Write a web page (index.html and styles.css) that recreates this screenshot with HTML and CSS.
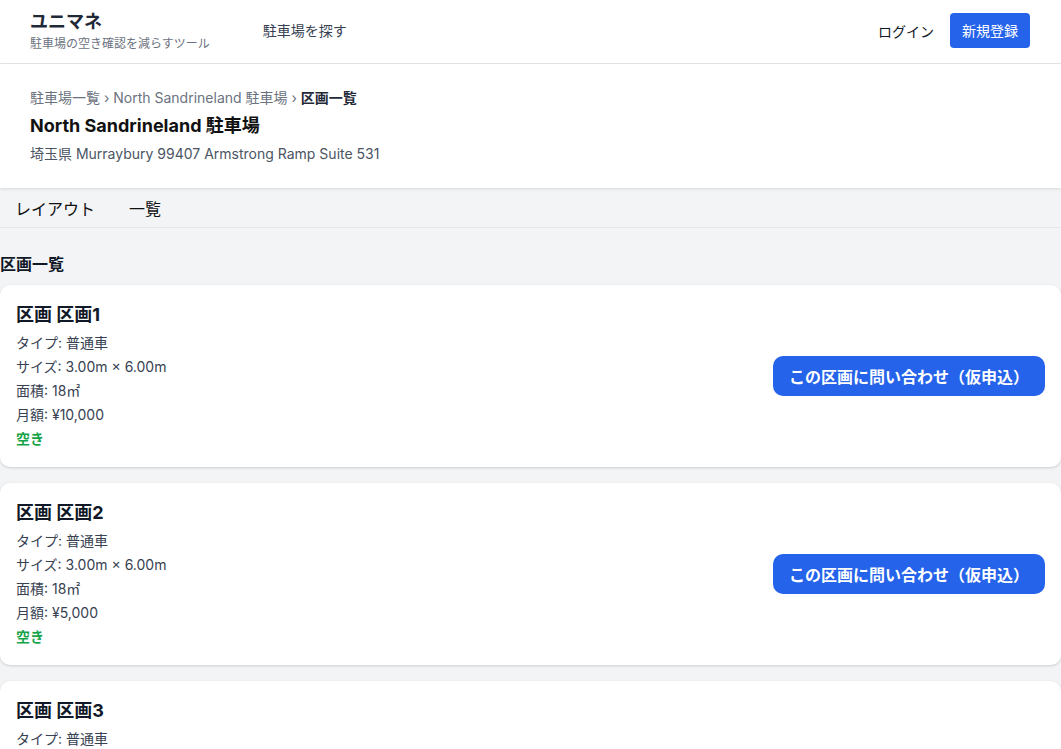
FILE: index.html
```html
<!DOCTYPE html>
<html lang="ja">
<head>
<meta charset="UTF-8" />
<meta name="viewport" content="width=device-width, initial-scale=1" />
<title>区画一覧 | ユニマネ</title>
<link rel="stylesheet" href="styles.css">
</head>
<body>

<header class="site-header">
  <div class="brand">
    <div class="brand-name">ユニマネ</div>
    <div class="brand-tagline">駐車場の空き確認を減らすツール</div>
  </div>
  <nav class="main-nav">
    <a href="#">駐車場を探す</a>
  </nav>
  <div class="auth">
    <a href="#" class="login-link">ログイン</a>
    <a href="#" class="signup-btn">新規登録</a>
  </div>
</header>

<section class="lot-header">
  <div class="breadcrumb">
    <a href="#">駐車場一覧</a> › <a href="#">North Sandrineland 駐車場</a> › <strong>区画一覧</strong>
  </div>
  <h1 class="lot-title">North Sandrineland 駐車場</h1>
  <p class="lot-address">埼玉県 Murraybury 99407 Armstrong Ramp Suite 531</p>
</section>

<div class="tabs">
  <a href="#" class="tab">レイアウト</a>
  <a href="#" class="tab">一覧</a>
</div>

<main class="spaces">
  <h2 class="section-title">区画一覧</h2>

  <div class="space-card">
    <div class="space-info">
      <h3>区画 区画1</h3>
      <p>タイプ: 普通車</p>
      <p>サイズ: 3.00m × 6.00m</p>
      <p>面積: 18㎡</p>
      <p>月額: ¥10,000</p>
      <p class="status-free">空き</p>
    </div>
    <button class="inquiry-btn">この区画に問い合わせ（仮申込）</button>
  </div>

  <div class="space-card">
    <div class="space-info">
      <h3>区画 区画2</h3>
      <p>タイプ: 普通車</p>
      <p>サイズ: 3.00m × 6.00m</p>
      <p>面積: 18㎡</p>
      <p>月額: ¥5,000</p>
      <p class="status-free">空き</p>
    </div>
    <button class="inquiry-btn">この区画に問い合わせ（仮申込）</button>
  </div>

  <div class="space-card">
    <div class="space-info">
      <h3>区画 区画3</h3>
      <p>タイプ: 普通車</p>
      <p>サイズ: 3.00m × 6.00m</p>
      <p>面積: 18㎡</p>
      <p>月額: ¥8,000</p>
      <p class="status-free">空き</p>
    </div>
    <button class="inquiry-btn">この区画に問い合わせ（仮申込）</button>
  </div>
</main>

</body>
</html>
```

FILE: styles.css
```css
/* Inter for latin, Noto CJK for Japanese */
body {
  font-family: Inter, "Noto Sans CJK JP", sans-serif;
  margin: 0;
  background: #f3f4f6;
  color: #111827;
}

a {
  color: inherit;
  text-decoration: none;
}

.site-header {
  display: flex;
  align-items: center;
  height: 63px;
  padding: 0 31px 0 30px;
  background: #fff;
  border-bottom: 1px solid #e5e7eb;
}

.brand-name {
  font-size: 18px;
  font-weight: 700;
  line-height: 22px;
  color: #1f2937;
}
.brand-tagline {
  font-size: 12px;
  line-height: 18px;
  margin-top: 2px;
  color: #6b7280;
}

.main-nav {
  margin-left: 53px;
  margin-bottom: 4px;
  font-size: 14px;
  color: #374151;
}

.auth {
  margin-left: auto;
  margin-bottom: 2px;
  display: flex;
  align-items: center;
  gap: 16px;
  font-size: 14px;
}
.signup-btn {
  background: #2563eb;
  color: #fff;
  padding: 0 12px;
  height: 35px;
  line-height: 35px;
  border-radius: 4px;
}

.lot-header {
  background: #fff;
  padding: 24px 30px 24px;
  box-shadow: 0 1px 3px rgba(0, 0, 0, 0.12);
  position: relative;
}
.breadcrumb {
  font-size: 14px;
  line-height: 20px;
  color: #6b7280;
}
.breadcrumb strong {
  color: #1f2937;
}
.lot-title {
  font-size: 18px;
  font-weight: 700;
  line-height: 28px;
  margin: 4px 0 4px;
  color: #111;
}
.lot-address {
  font-size: 14px;
  line-height: 20px;
  margin: 0;
  color: #4b5563;
}

.tabs {
  display: flex;
  gap: 34px;
  padding: 0 15px;
  height: 39px;
  align-items: center;
  border-bottom: 1px solid #e5e7eb;
  font-size: 16px;
  color: #111;
}

.spaces {
  padding-top: 24px;
}
.section-title {
  font-size: 16px;
  font-weight: 700;
  line-height: 24px;
  margin: 0 0 9px;
}

.space-card {
  display: flex;
  align-items: center;
  justify-content: space-between;
  background: #fff;
  border-radius: 10px;
  box-shadow: 0 1px 3px rgba(0, 0, 0, 0.16);
  padding: 16px 16px;
  margin-bottom: 16px;
}
.space-info h3 {
  font-size: 18px;
  font-weight: 700;
  line-height: 28px;
  margin: 0 0 2px;
}
.space-info p {
  font-size: 14px;
  line-height: 24px;
  margin: 0;
  color: #374151;
}
.space-info .status-free {
  color: #16a34a;
  font-weight: 600;
}

.inquiry-btn {
  font-family: inherit;
  background: #2563eb;
  color: #fff;
  border: none;
  border-radius: 10px;
  font-size: 16px;
  font-weight: 700;
  height: 40px;
  width: 272px;
  cursor: pointer;
}
```
